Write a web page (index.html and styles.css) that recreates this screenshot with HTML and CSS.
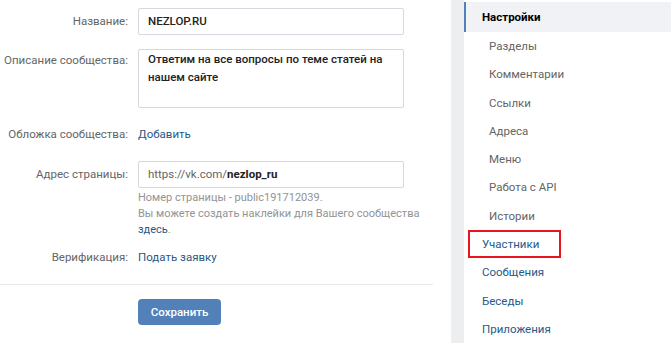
FILE: index.html
```html
<!DOCTYPE html>
<html lang="ru">
<head>
<meta charset="utf-8">
<link rel="stylesheet" href="styles.css">
</head>
<body>
<div class="page">
  <div class="main">
    <div class="form">
      <div class="row row-name">
        <div class="label">Название:</div>
        <div class="field"><div class="input name-input">NEZLOP.RU</div></div>
      </div>
      <div class="row row-desc">
        <div class="label">Описание сообщества:</div>
        <div class="field"><div class="textarea">Ответим на все вопросы по теме статей на нашем сайте</div></div>
      </div>
      <div class="row row-cover">
        <div class="label">Обложка сообщества:</div>
        <div class="field"><span class="link">Добавить</span></div>
      </div>
      <div class="row row-addr">
        <div class="label">Адрес страницы:</div>
        <div class="field">
          <div class="input addr-input"><span class="prefix">https://vk.com/</span><span class="addr">nezlop_ru</span></div>
          <div class="hint">Номер страницы - public191712039.<br>Вы можете создать наклейки для Вашего сообщества<br><span class="link">здесь</span>.</div>
        </div>
      </div>
      <div class="row row-verif">
        <div class="label">Верификация:</div>
        <div class="field"><span class="link">Подать заявку</span></div>
      </div>
    </div>
    <div class="sep"></div>
    <div class="actions">
      <button class="btn">Сохранить</button>
    </div>
  </div>
  <div class="side">
    <div class="menu">
      <div class="item active">Настройки</div>
      <div class="item sub">Разделы</div>
      <div class="item sub">Комментарии</div>
      <div class="item sub">Ссылки</div>
      <div class="item sub">Адреса</div>
      <div class="item sub">Меню</div>
      <div class="item sub">Работа с API</div>
      <div class="item sub">Истории</div>
      <div class="item boxed"><span class="box">Участники</span></div>
      <div class="item">Сообщения</div>
      <div class="item">Беседы</div>
      <div class="item">Приложения</div>
    </div>
  </div>
</div>
</body>
</html>
```
FILE: styles.css
```css
html, body {
  margin: 0;
  padding: 0;
  background: #edeef0;
}
body {
  font-family: Roboto, "Liberation Sans", Arial, sans-serif;
  font-size: 11.5px;
  color: #000;
  width: 671px;
  height: 343px;
  overflow: hidden;
}
.page {
  display: flex;
  gap: 13px;
  height: 343px;
}
.main {
  width: 451px;
  background: #fff;
  flex: none;
}
.form {
  padding-top: 8px;
}
.row {
  display: grid;
  grid-template-columns: 128px 266px;
  column-gap: 10px;
  align-items: start;
}
.label {
  text-align: right;
  color: #656565;
  line-height: 26px;
  white-space: nowrap;
}
.input {
  box-sizing: border-box;
  height: 27px;
  border: 1px solid #d3d9de;
  border-radius: 2px;
  padding: 0 9px;
  line-height: 25px;
}
.name-input {
  font-weight: 500;
  color: #222;
}
.row-desc {
  margin-top: 14px;
}
.row-desc .label {
  line-height: 22px;
}
.textarea {
  box-sizing: border-box;
  height: 59px;
  border: 1px solid #d3d9de;
  border-radius: 2px;
  padding: 0 9px;
  line-height: 18px;
  font-weight: 500;
  color: #222;
}
.row-cover {
  margin-top: 13px;
}
.link {
  color: #2a5885;
  line-height: 26px;
}
.row-cover .field, .row-verif .field {
  line-height: 26px;
}
.row-addr {
  margin-top: 14px;
}
.prefix {
  color: #656565;
}
.addr {
  font-weight: 700;
  color: #222;
}
.hint {
  font-size: 11px;
  color: #939393;
  line-height: 16px;
  margin-top: 2px;
  white-space: nowrap;
}
.hint .link {
  line-height: 16px;
}
.row-verif {
  margin-top: 6px;
}
.sep {
  height: 1px;
  background: #e7e8ec;
  margin: 14px 18px 0 0;
}
.actions {
  padding: 14px 0 0 138px;
}
.btn {
  font-family: inherit;
  font-size: 11.5px;
  font-weight: 500;
  color: #fff;
  background: #5181b8;
  border: 0;
  border-radius: 4px;
  width: 83px;
  height: 26px;
  padding: 0;
}
.side {
  flex: 1;
  background: #fff;
}
.menu {
  padding-top: 2px;
}
.item {
  height: 28.3px;
  line-height: 28px;
  padding-left: 18px;
  color: #2a5885;
}
.item.active {
  background: #f0f2f5;
  border-left: 2px solid #5181b8;
  padding-left: 16px;
  font-weight: 700;
  color: #000;
  height: 30px;
  line-height: 30px;
}
.item.sub {
  padding-left: 25px;
  color: #656565;
}
.item.boxed {
  padding-left: 4px;
}
.box {
  display: inline-block;
  box-sizing: border-box;
  width: 93px;
  height: 28px;
  line-height: 24px;
  border: 2px solid #e8141e;
  padding-left: 12px;
}
```
